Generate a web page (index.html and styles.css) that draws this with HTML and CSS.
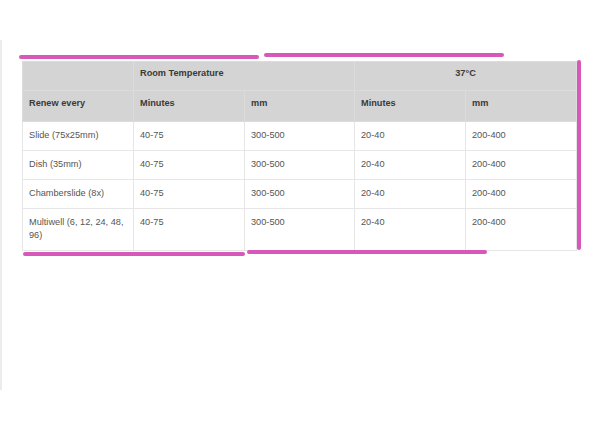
FILE: index.html
```html
<!DOCTYPE html>
<html>
<head>
<meta charset="utf-8">
<link rel="stylesheet" href="styles.css">
</head>
<body>
<div class="frame">
  <table class="grid">
    <colgroup>
      <col class="c1"><col class="c2"><col class="c3"><col class="c4"><col class="c5">
    </colgroup>
    <thead>
      <tr class="h1">
        <th></th>
        <th colspan="2" class="left">Room Temperature</th>
        <th colspan="2" class="center">37°C</th>
      </tr>
      <tr class="h2">
        <th>Renew every</th>
        <th>Minutes</th>
        <th>mm</th>
        <th>Minutes</th>
        <th>mm</th>
      </tr>
    </thead>
    <tbody>
      <tr><td>Slide (75x25mm)</td><td>40-75</td><td>300-500</td><td>20-40</td><td>200-400</td></tr>
      <tr><td>Dish (35mm)</td><td>40-75</td><td>300-500</td><td>20-40</td><td>200-400</td></tr>
      <tr><td>Chamberslide (8x)</td><td>40-75</td><td>300-500</td><td>20-40</td><td>200-400</td></tr>
      <tr><td>Multiwell (6, 12, 24, 48, 96)</td><td>40-75</td><td>300-500</td><td>20-40</td><td>200-400</td></tr>
    </tbody>
  </table>
  <div class="mark m-top-left"></div>
  <div class="mark m-top-right"></div>
  <div class="mark m-right"></div>
  <div class="mark m-bottom-left"></div>
  <div class="mark m-bottom-right"></div>
</div>
</body>
</html>
```
FILE: styles.css
```css
html, body {
  margin: 0;
  padding: 0;
  background: #ffffff;
}
body {
  width: 592px;
  height: 444px;
  overflow: hidden;
  font-family: "Liberation Sans", Arial, sans-serif;
}
.frame {
  position: relative;
  margin-top: 40px;
  height: 350px;
  border-left: 2px solid #ececec;
  padding: 21px 0 0 20px;
  box-sizing: border-box;
}
.grid {
  border-collapse: collapse;
  table-layout: fixed;
  width: 554px;
  font-size: 9.2px;
  line-height: 13px;
}
.c1 { width: 111px; }
.c2 { width: 111px; }
.c3 { width: 110px; }
.c4 { width: 111px; }
.c5 { width: 111px; }
.grid th {
  background: #d4d4d4;
  color: #3a3a3a;
  font-weight: bold;
  text-align: left;
  vertical-align: top;
  padding: 5px 6px 0 6px;
  border: 1px solid #dcdcdc;
}
.grid th.center { text-align: center; }
.h1 th { height: 23px; }
.h2 th { height: 24px; padding-top: 6px; }
.grid td {
  color: #555555;
  vertical-align: top;
  padding: 7px 6px 8px 6px;
  border: 1px solid #e6e6e6;
  background: #ffffff;
}
.mark {
  position: absolute;
  background: #d658b9;
  border-radius: 2px;
  height: 4px;
}
.m-top-left { left: 17px; top: 15px; width: 240px; }
.m-top-right { left: 262px; top: 13px; width: 240px; }
.m-right { left: 575px; top: 20px; width: 4px; height: 190px; }
.m-bottom-left { left: 21px; top: 212px; width: 222px; }
.m-bottom-right { left: 245px; top: 210px; width: 240px; }
```
